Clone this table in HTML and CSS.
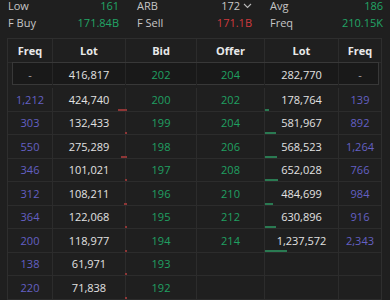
FILE: index.html
```html
<!DOCTYPE html>
<html>
<head>
<meta charset="utf-8">
<link rel="stylesheet" href="styles.css">
</head>
<body>
<div class="stats">
  <div class="pair"><span class="lbl">Low</span><span class="up">161</span></div>
  <div class="pair"><span class="lbl">ARB</span><span class="neutral">172 <svg class="chev" width="9" height="6" viewBox="0 0 9 6"><path d="M1 1l3.5 3.5L8 1" fill="none" stroke="#b8b8b8" stroke-width="1.1"/></svg></span></div>
  <div class="pair"><span class="lbl">Avg</span><span class="up">186</span></div>
  <div class="pair"><span class="lbl">F Buy</span><span class="up">171.84B</span></div>
  <div class="pair"><span class="lbl">F Sell</span><span class="down">171.1B</span></div>
  <div class="pair"><span class="lbl">Freq</span><span class="up">210.15K</span></div>
</div>

<div class="book">
  <div class="row head">
    <div class="c">Freq</div><div class="c">Lot</div><div class="c">Bid</div><div class="c">Offer</div><div class="c">Lot</div><div class="c">Freq</div>
  </div>
  <div class="row best">
    <div class="c dash">-</div><div class="c lot">416,817</div><div class="c px">202</div><div class="c px">204</div><div class="c lot">282,770</div><div class="c dash">-</div>
  </div>
  <div class="row">
    <div class="c fq">1,212</div><div class="c lot">424,740<i class="bar bb" style="width:9px"></i></div><div class="c px">200</div><div class="c px">202</div><div class="c lot">178,764<i class="bar ob" style="width:4px"></i></div><div class="c fq">139</div>
  </div>
  <div class="row">
    <div class="c fq">303</div><div class="c lot">132,433<i class="bar bb" style="width:2px"></i></div><div class="c px">199</div><div class="c px">204</div><div class="c lot">581,967<i class="bar ob" style="width:11px"></i></div><div class="c fq">892</div>
  </div>
  <div class="row">
    <div class="c fq">550</div><div class="c lot">275,289<i class="bar bb" style="width:6px"></i></div><div class="c px">198</div><div class="c px">206</div><div class="c lot">568,523<i class="bar ob" style="width:12px"></i></div><div class="c fq">1,264</div>
  </div>
  <div class="row">
    <div class="c fq">346</div><div class="c lot">101,021<i class="bar bb" style="width:2px"></i></div><div class="c px">197</div><div class="c px">208</div><div class="c lot">652,028<i class="bar ob" style="width:13px"></i></div><div class="c fq">766</div>
  </div>
  <div class="row">
    <div class="c fq">312</div><div class="c lot">108,211<i class="bar bb" style="width:3px"></i></div><div class="c px">196</div><div class="c px">210</div><div class="c lot">484,699<i class="bar ob" style="width:8px"></i></div><div class="c fq">984</div>
  </div>
  <div class="row">
    <div class="c fq">364</div><div class="c lot">122,068<i class="bar bb" style="width:2px"></i></div><div class="c px">195</div><div class="c px">212</div><div class="c lot">630,896<i class="bar ob" style="width:11px"></i></div><div class="c fq">916</div>
  </div>
  <div class="row">
    <div class="c fq">200</div><div class="c lot">118,977<i class="bar bb" style="width:2px"></i></div><div class="c px">194</div><div class="c px">214</div><div class="c lot">1,237,572<i class="bar ob" style="width:22px"></i></div><div class="c fq">2,343</div>
  </div>
  <div class="row">
    <div class="c fq">138</div><div class="c lot">61,971<i class="bar bb" style="width:2px"></i></div><div class="c px">193</div><div class="c"></div><div class="c"></div><div class="c"></div>
  </div>
  <div class="row">
    <div class="c fq">220</div><div class="c lot">71,838<i class="bar bb" style="width:2px"></i></div><div class="c px">192</div><div class="c"></div><div class="c"></div><div class="c"></div>
  </div>
</div>
</body>
</html>
```
FILE: styles.css
```css
html, body {
  margin: 0;
  padding: 0;
  background: #1f1f1f;
  font-family: "Open Sans", "Liberation Sans", sans-serif;
  font-size: 11px;
  color: #e2e2e2;
  overflow: hidden;
}

.stats {
  display: grid;
  grid-template-columns: 111px 115px 113px;
  column-gap: 18px;
  padding-left: 8px;
  margin-top: -3px;
  line-height: 17px;
}

.pair {
  display: flex;
  justify-content: space-between;
  align-items: center;
}

.lbl { color: #c6c6c6; }
.up { color: #22a566; }
.down { color: #cf3a3e; }
.neutral {
  color: #c8c8c8;
  display: flex;
  align-items: center;
  gap: 3px;
}
.chev { display: block; }

.book {
  margin: 7px 8px 0 7px;
  border: 1px solid #2e2e2e;
  border-bottom: none;
}

.row {
  display: grid;
  grid-template-columns: 45px 73px 71px 68px 74px 42px;
  height: 23.5px;
  box-sizing: border-box;
  border-bottom: 1px solid #2c2c2c;
  position: relative;
}

.c {
  display: flex;
  align-items: center;
  justify-content: center;
  border-right: 1px solid #2c2c2c;
  position: relative;
  z-index: 1;
}
.c:last-child { border-right: none; }

.head {
  height: 24px;
  font-weight: 700;
  color: #e9e9e9;
}

.best {
  height: 25px;
  border-bottom: none;
  padding-bottom: 3px;
}
.best::before {
  content: "";
  position: absolute;
  top: -1px;
  bottom: 3px;
  left: 4px;
  right: 2px;
  background: #191919;
  border: 1px solid #383838;
  z-index: 0;
}
.best .c { border-right-color: #262626; }

.dash { color: #a8a8a8; }
.lot { color: #e2e2e2; }
.px { color: #20a062; }
.fq { color: #6460c4; }

.bar {
  position: absolute;
  bottom: 0;
  height: 2px;
}
.bb {
  right: -2px;
  background: #8e3636;
}
.ob {
  left: 0;
  background: #2a7a52;
}
```
